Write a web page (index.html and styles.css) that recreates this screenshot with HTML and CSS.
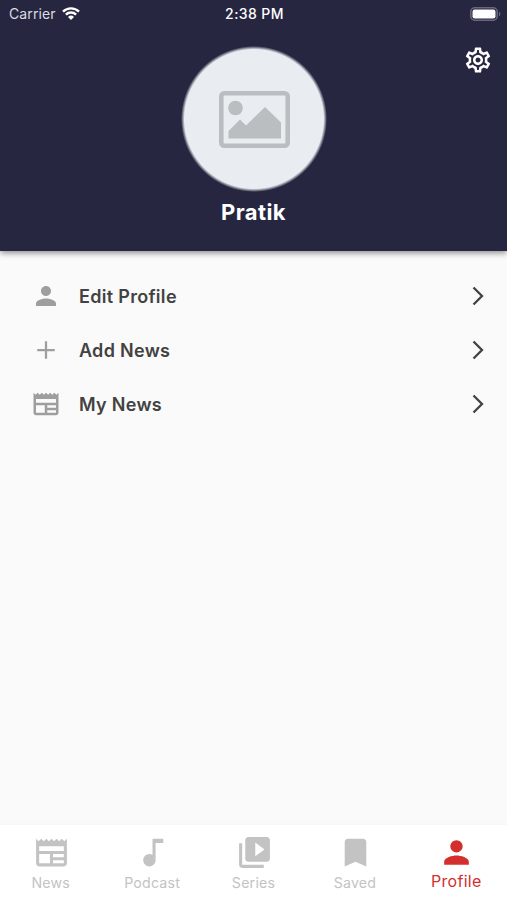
FILE: index.html
```html
<!DOCTYPE html>
<html lang="en">
<head>
	<meta charset="UTF-8">
	<meta name="viewport" content="width=device-width, initial-scale=1.0">
	<title>Profile</title>
	<link rel="stylesheet" href="styles.css">
</head>
<body>

	<svg class="sprite" width="0" height="0">
		<symbol id="person" viewBox="0 0 24 24"><path d="M12 12c2.21 0 4-1.79 4-4s-1.79-4-4-4-4 1.79-4 4 1.79 4 4 4zm0 2c-2.67 0-8 1.34-8 4v2h16v-2c0-2.66-5.33-4-8-4z"/></symbol>
		<symbol id="news" viewBox="0 0 24 24"><path d="M22 3l-1.67 1.67L18.67 3 17 4.67 15.33 3l-1.66 1.67L12 3l-1.67 1.67L8.67 3 7 4.67 5.33 3 3.67 4.67 2 3v16c0 1.1.9 2 2 2h16c1.1 0 2-.9 2-2V3zM11 19H4v-6h7v6zm9 0h-7v-2h7v2zm0-4h-7v-2h7v2zm0-4H4V8h16v3z"/></symbol>
		<symbol id="arrow" viewBox="0 0 12 20"><path d="M1.5 1.5L10 10l-8.500 8.500" fill="none" stroke="currentColor" stroke-width="2.300"/></symbol>
	</svg>

	<div class="screen">
		<header class="header">
			<div class="status">
				<div class="carrier">
					<span>Carrier</span>
					<svg class="wifi" viewBox="0 0 18 13">
						<path d="M1 4.600a11.500 11.500 0 0 1 16 0M3.900 7.600a7.300 7.300 0 0 1 10.200 0" fill="none" stroke="currentColor" stroke-width="2.400"/>
						<path d="M9 13L6 10a4.300 4.300 0 0 1 6 0z"/>
					</svg>
				</div>
				<div class="time">2:38 PM</div>
				<svg class="battery" viewBox="0 0 31 14">
					<rect x=".8" y=".8" width="26.400" height="12.400" rx="4" fill="none" stroke="#68677c" stroke-width="1.600"/>
					<rect x="2.500" y="2.500" width="23" height="9" rx="2.200"/>
					<path d="M29 4.800c2 .8 2 3.600 0 4.400z" fill="#68677c"/>
				</svg>
			</div>
			<svg class="settings" viewBox="0 0 24 24"><path d="M19.43 12.98c.04-.32.07-.64.07-.98 0-.34-.03-.66-.07-.98l2.110-1.650c.19-.15.24-.42.12-.64l-2-3.460c-.09-.16-.26-.25-.44-.25-.06 0-.12.01-.17.03l-2.490 1c-.52-.4-1.080-.73-1.690-.98l-.38-2.650C14.460 2.180 14.250 2 14 2h-4c-.25 0-.46.18-.49.42l-.38 2.650c-.61.25-1.170.59-1.690.98l-2.490-1c-.06-.02-.12-.03-.18-.03-.17 0-.34.09-.43.25l-2 3.460c-.13.22-.07.49.12.64l2.110 1.650c-.04.32-.07.65-.07.98 0 .33.03.66.07.98l-2.110 1.650c-.19.15-.24.42-.12.64l2 3.460c.09.16.26.25.44.25.06 0 .12-.01.17-.03l2.490-1c.52.4 1.080.73 1.690.98l.38 2.650c.03.24.24.42.49.42h4c.25 0 .46-.18.49-.42l.38-2.650c.61-.25 1.170-.59 1.690-.98l2.490 1c.06.02.12.03.18.03.17 0 .34-.09.43-.25l2-3.460c.12-.22.07-.49-.12-.64l-2.110-1.650zm-1.980-1.710c.04.31.05.52.05.73 0 .21-.02.43-.05.73l-.14 1.130.89.7 1.080.84-.7 1.210-1.270-.51-1.040-.42-.9.68c-.43.32-.84.56-1.250.73l-1.060.43-.16 1.130-.2 1.350h-1.400l-.19-1.350-.16-1.130-1.060-.43c-.43-.18-.83-.41-1.230-.71l-.91-.7-1.060.43-1.270.51-.7-1.210 1.080-.84.89-.7-.14-1.130c-.03-.31-.05-.54-.05-.74s.02-.43.05-.73l.14-1.130-.89-.7-1.080-.84.7-1.210 1.270.51 1.040.42.9-.68c.43-.32.84-.56 1.250-.73l1.060-.43.16-1.130.2-1.350h1.390l.19 1.350.16 1.130 1.060.43c.43.18.83.41 1.230.71l.91.7 1.060-.43 1.270-.51.7 1.210-1.070.85-.89.7.14 1.130zM12 8c-2.210 0-4 1.790-4 4s1.790 4 4 4 4-1.790 4-4-1.790-4-4-4zm0 6c-1.100 0-2-.9-2-2s.9-2 2-2 2 .9 2 2-.9 2-2 2z"/></svg>
			<div class="avatar">
				<svg class="picture" viewBox="0 0 71 57">
					<rect x="2.300" y="2.300" width="66.400" height="52.400" rx="3" fill="none" stroke="currentColor" stroke-width="4.600"/>
					<circle cx="16.500" cy="17" r="7.300"/>
					<path d="M9.500 47.500V40L21 28.500l6 6L46 16l16 15.500v16z"/>
				</svg>
			</div>
			<h1 class="name">Pratik</h1>
		</header>

		<main class="menu">
			<div class="row">
				<svg class="icon"><use href="#person"/></svg>
				<span class="label">Edit Profile</span>
				<svg class="arrow"><use href="#arrow"/></svg>
			</div>
			<div class="row">
				<svg class="icon" viewBox="0 0 24 24"><path d="M19 12.900h-6.100V19h-1.800v-6.100H5v-1.800h6.100V5h1.800v6.100H19z"/></svg>
				<span class="label">Add News</span>
				<svg class="arrow"><use href="#arrow"/></svg>
			</div>
			<div class="row">
				<svg class="icon"><use href="#news"/></svg>
				<span class="label">My News</span>
				<svg class="arrow"><use href="#arrow"/></svg>
			</div>
		</main>

		<nav class="tabs">
			<div class="tab">
				<svg class="tab-icon"><use href="#news"/></svg>
				<span>News</span>
			</div>
			<div class="tab">
				<svg class="tab-icon" viewBox="0 0 24 24"><path d="M12 3v10.550c-.59-.34-1.270-.55-2-.55-2.210 0-4 1.790-4 4s1.790 4 4 4 4-1.790 4-4V5.800h5V3h-7z"/></svg>
				<span>Podcast</span>
			</div>
			<div class="tab">
				<svg class="tab-icon" viewBox="0 0 24 24"><path d="M4 6H2v14c0 1.100.9 2 2 2h14v-2H4V6zm16-4H8c-1.100 0-2 .9-2 2v12c0 1.100.9 2 2 2h12c1.100 0 2-.9 2-2V4c0-1.100-.9-2-2-2zm-7.500 12.500v-9l6 4.500-6 4.500z"/></svg>
				<span>Series</span>
			</div>
			<div class="tab">
				<svg class="tab-icon" viewBox="0 0 24 24"><path d="M17 3H7c-1.100 0-2 .9-2 2v16l7-3 7 3V5c0-1.100-.9-2-2-2z"/></svg>
				<span>Saved</span>
			</div>
			<div class="tab active">
				<svg class="tab-icon"><use href="#person"/></svg>
				<span>Profile</span>
			</div>
		</nav>
	</div>

</body>
</html>
```
FILE: styles.css
```css
*{
	box-sizing: border-box;
	margin: 0;
	padding: 0;
}

body{
	font-family: Inter, "Liberation Sans", sans-serif;
	background-color: #fafafa;
}

svg{
	display: block;
	flex: none;
	fill: currentColor;
}

.sprite{
	position: absolute;
}

.screen{
	display: flex;
	flex-direction: column;
	height: 900px;
	overflow: hidden;
}

.header{
	display: flex;
	flex-direction: column;
	align-items: center;
	position: relative;
	height: 251px;
	color: white;
	background-color: #272640;
	box-shadow: 0 2px 6px rgba(0, 0, 0, 0.45);
}

.status{
	display: grid;
	grid-template-columns: 1fr auto 1fr;
	align-items: center;
	width: 100%;
	height: 27px;
	padding: 0 7px 0 9px;
	font-size: 14px;
}

.carrier{
	display: flex;
	align-items: center;
	gap: 6px;
	color: #dcdce3;
	letter-spacing: 0.1px;
}

.wifi{
	width: 18px;
	height: 13px;
	color: white;
}

.time{
	font-size: 14px;
	font-weight: 500;
	letter-spacing: 0.4px;
}

.battery{
	justify-self: end;
	width: 31px;
	height: 14px;
	margin-right: -1px;
}

.settings{
	position: absolute;
	top: 44.5px;
	right: 14.5px;
	width: 30px;
	height: 30px;
}

/* soft edge instead of a border */
.avatar{
	display: flex;
	align-items: center;
	justify-content: center;
	width: 146px;
	height: 146px;
	margin-top: 19px;
	margin-left: 1px;
	border-radius: 50%;
	color: #babec1;
	background: radial-gradient(circle, #e9edf1 69.5px, rgba(233, 237, 241, 0) 73px);
}

.picture{
	width: 71px;
	height: 57px;
}

.name{
	margin-top: 6px;
	font-size: 22px;
	line-height: 28px;
	font-weight: 700;
	letter-spacing: 0.4px;
}

.menu{
	flex: 1;
	padding: 18px 23.5px 0 31px;
}

.row{
	display: flex;
	align-items: center;
	height: 54px;
	color: #424242;
}

.icon{
	width: 30px;
	height: 30px;
	color: #9e9e9e;
}

.label{
	flex: 1;
	margin-left: 18px;
	font-size: 18px;
	font-weight: 600;
	letter-spacing: 0.3px;
}

.arrow{
	width: 12px;
	height: 20px;
}

.tabs{
	display: flex;
	height: 75px;
	background-color: white;
	box-shadow: 0 0 8px rgba(0, 0, 0, 0.03);
}

.tab{
	flex: 1;
	display: flex;
	flex-direction: column;
	align-items: center;
	padding-top: 9px;
	font-size: 14.2px;
	line-height: 20px;
	letter-spacing: 0.2px;
	color: #c4c3c4;
}

.tab-icon{
	width: 37px;
	height: 37px;
	margin: 0 0 2px 1px;
}

.active{
	font-size: 16px;
	letter-spacing: 0.3px;
	color: #d32f2c;
}

.active .tab-icon{
	margin: 0;
}
```
